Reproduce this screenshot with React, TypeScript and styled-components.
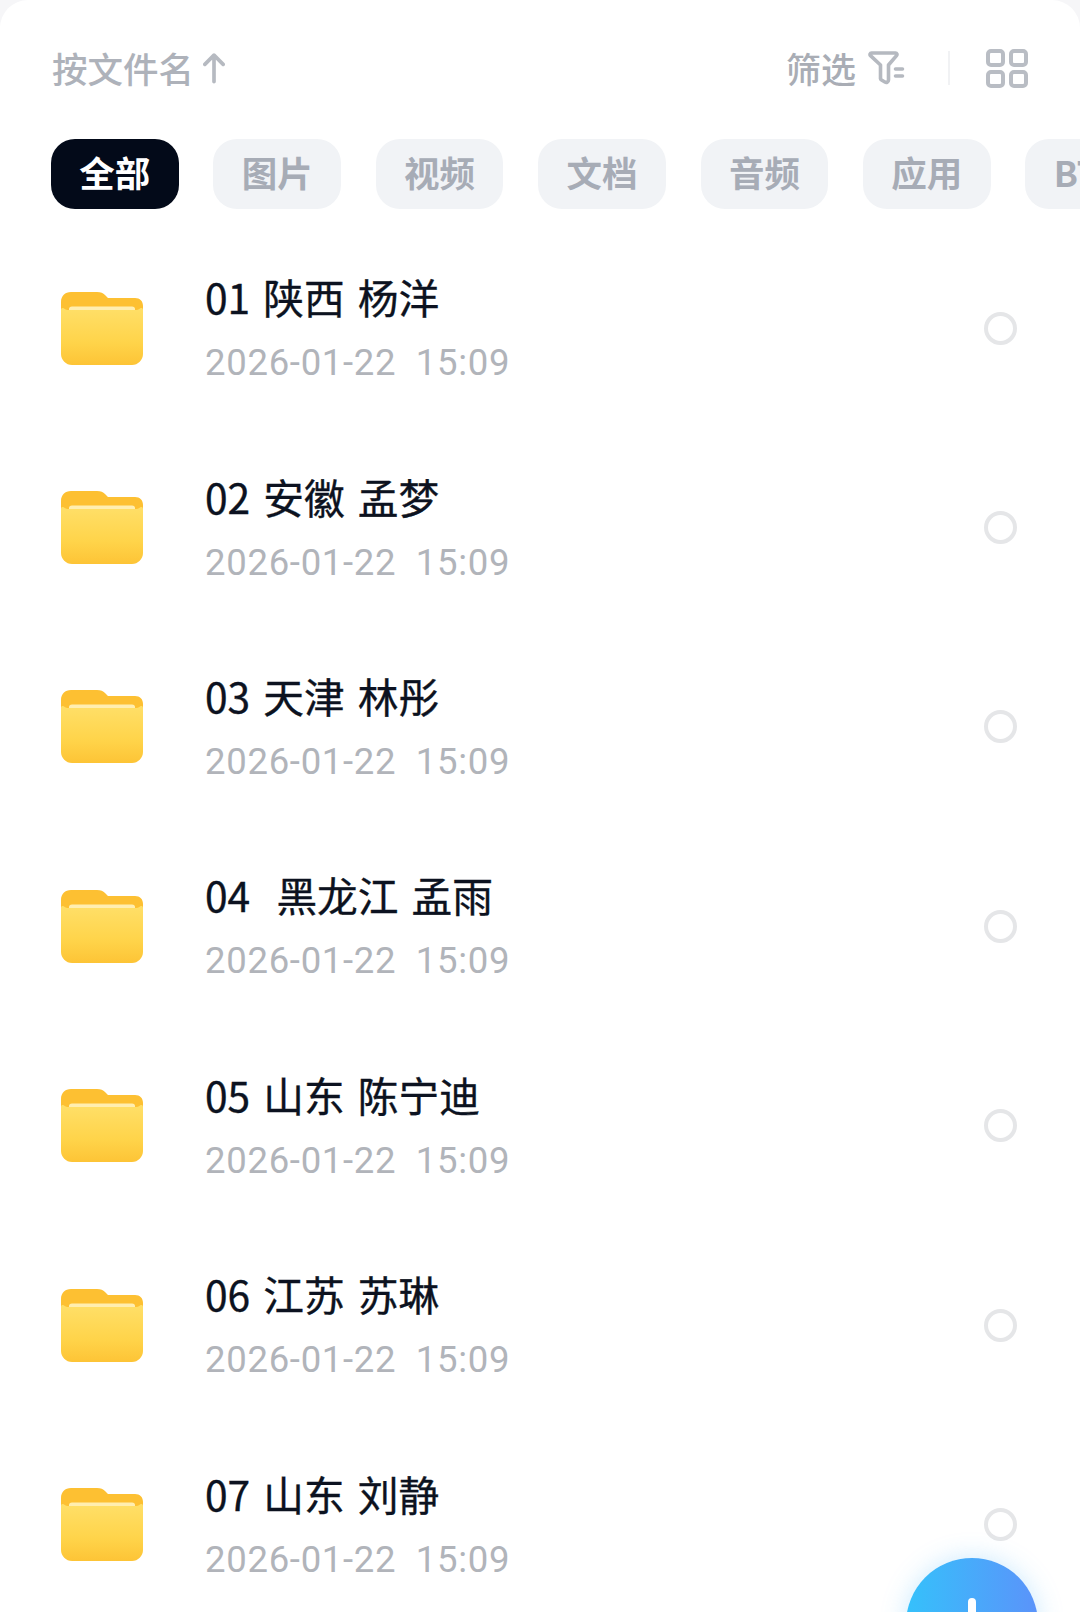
import React from "react";
import styled, { createGlobalStyle } from "styled-components";

const Global = createGlobalStyle`
  html, body { margin: 0; padding: 0; background: #f6f6f8; }
  body { width: 1080px; height: 1612px; overflow: hidden; }
  #root { width: 1080px; height: 1612px; }
`;

const cjk = `"Noto Sans CJK SC", "Noto Sans", sans-serif`;

const Sheet = styled.div`
  position: relative;
  width: 1080px;
  height: 1612px;
  overflow: hidden;
  background: #fff;
  border-radius: 28px 28px 0 0;
  font-family: ${cjk};
`;

const Toolbar = styled.div`
  display: flex;
  align-items: center;
  justify-content: space-between;
  height: 70px;
  padding: 33px 52px 1px 52px;
`;

const SortLabel = styled.div`
  display: flex;
  align-items: center;
  gap: 9px;
  font-size: 35.5px;
  font-weight: 500;
  line-height: 40px;
  color: #aeb2ba;
`;

const Tools = styled.div`
  display: flex;
  align-items: center;
`;

const FilterLabel = styled.span`
  font-size: 35px;
  font-weight: 500;
  line-height: 40px;
  color: #a9adb5;
  margin-right: 12px;
`;

const Divider = styled.div`
  width: 2px;
  height: 34px;
  background: #f1f2f4;
  margin: 0 36px 0 43px;
`;

const Chips = styled.div`
  display: flex;
  gap: 34.8px;
  margin-top: 35px;
  padding-left: 51px;
  width: 1200px;
`;

const Chip = styled.div<{ $active?: boolean }>`
  flex: none;
  height: 70px;
  box-sizing: border-box;
  padding: 0 28.3px 5px;
  border-radius: 24px;
  display: flex;
  align-items: center;
  justify-content: center;
  font-size: 35.5px;
  font-weight: 700;
  background: ${(p) => (p.$active ? "#030a19" : "#f1f3f6")};
  color: ${(p) => (p.$active ? "#ffffff" : "#a7acb6")};
`;

const List = styled.div`
  margin-top: 19.5px;
`;

const Row = styled.div`
  display: flex;
  align-items: center;
  height: 199.4px;
  padding-left: 60.5px;
  padding-right: 63px;
`;

const FolderWrap = styled.div`
  flex: none;
  width: 82px;
  height: 73px;
  margin-right: 62.5px;
`;

const Info = styled.div`
  flex: 1;
  display: flex;
  flex-direction: column;
  padding-top: 2px;
`;

const Name = styled.div`
  font-size: 40.7px;
  line-height: 50px;
  font-weight: 400;
  word-spacing: 4px;
  color: #0c1220;
  -webkit-text-stroke: 0.35px #0c1220;
  white-space: pre;
`;

const Time = styled.div`
  margin-top: 18px;
  font-family: Roboto, "Noto Sans", sans-serif;
  font-size: 36.5px;
  line-height: 46px;
  font-weight: 400;
  color: #b1b4ba;
  white-space: pre;
  letter-spacing: 0.7px;
`;

const Radio = styled.div`
  flex: none;
  width: 33px;
  height: 33px;
  box-sizing: border-box;
  border: 4px solid #e5e6e8;
  border-radius: 50%;
`;

const Fab = styled.div`
  position: absolute;
  left: 906px;
  top: 1558px;
  width: 132px;
  height: 132px;
  border-radius: 50%;
  background: linear-gradient(90deg, #35c1fb 0%, #5b93fa 100%);
  box-shadow: 0 0 26px rgba(70, 180, 250, 0.28);
  display: flex;
  align-items: center;
  justify-content: center;
`;

const ArrowUp = () => (
  <svg width="22" height="32" viewBox="0 0 24 34" fill="none" stroke="#b6bac1" strokeWidth="4" strokeLinecap="round" strokeLinejoin="round">
    <path d="M12 32V3M2 13 12 3l10 10" />
  </svg>
);

const FilterIcon = () => (
  <svg width="37" height="34" viewBox="0 0 36 34" fill="none" stroke="#b5b9c0" strokeWidth="3.6" strokeLinecap="round" strokeLinejoin="round">
    <path d="M3 2h24a1.5 1.5 0 0 1 1 2.6L20 14v15c0 2-2 3-3.6 2L13 29a2 2 0 0 1-1-2V14L2 4.6A1.5 1.5 0 0 1 3 2Z" />
    <path d="M27 18h7M27 25h7" />
  </svg>
);

const GridIcon = () => (
  <svg width="42" height="39" viewBox="0 0 42 39" fill="none" stroke="#b9bdc4" strokeWidth="4">
    <rect x="2" y="2" width="15" height="14" rx="3" />
    <rect x="25" y="2" width="15" height="14" rx="3" />
    <rect x="2" y="23" width="15" height="14" rx="3" />
    <rect x="25" y="23" width="15" height="14" rx="3" />
  </svg>
);

const FolderIcon = ({ id }: { id: number }) => (
  <svg width="82" height="73" viewBox="0 0 82 73">
    <defs>
      <linearGradient id={`front${id}`} x1="0" y1="0" x2="0" y2="1">
        <stop offset="0" stopColor="#ffdf68" />
        <stop offset="0.6" stopColor="#ffd44a" />
        <stop offset="1" stopColor="#fdc436" />
      </linearGradient>
    </defs>
    <path d="M0 10C0 4 4 0 10 0h26c4 0 6 1 8 3l3 3h27c5 0 8 3 8 8v44H0Z" fill="#fdc032" />
    <path d="M8 17c0-1.5 1-2.5 3-2.5h60c2 0 3 1 3 2.5v6H8Z" fill="#ffeeb0" />
    <path d="M0 18c0-1.800 1.200-2.600 3-1.500 1.500 1 3 1.500 5 1.500h66c2 0 3.500-.5 5-1.500 1.800-1.100 3-.3 3 1.500v44c0 6-5 11-11 11H11C5 73 0 68 0 62Z" fill={`url(#front${id})`} />
  </svg>
);

const tabs = ["全部", "图片", "视频", "文档", "音频", "应用", "BT"];
const names = [
  "01 陕西 杨洋",
  "02 安徽 孟梦",
  "03 天津 林彤",
  "04  黑龙江 孟雨",
  "05 山东 陈宁迪",
  "06 江苏 苏琳",
  "07 山东 刘静",
];

export default function App() {
  return (
    <>
      <Global />
      <Sheet>
        <Toolbar>
          <SortLabel>
            按文件名
            <ArrowUp />
          </SortLabel>
          <Tools>
            <FilterLabel>筛选</FilterLabel>
            <FilterIcon />
            <Divider />
            <GridIcon />
          </Tools>
        </Toolbar>
        <Chips>
          {tabs.map((t, i) => (
            <Chip key={t} $active={i === 0}>
              {t}
            </Chip>
          ))}
        </Chips>
        <List>
          {names.map((n, i) => (
            <Row key={n}>
              <FolderWrap>
                <FolderIcon id={i} />
              </FolderWrap>
              <Info>
                <Name>{n}</Name>
                <Time>2026-01-22  15:09</Time>
              </Info>
              <Radio />
            </Row>
          ))}
        </List>
        <Fab>
          <svg width="52" height="52" viewBox="0 0 52 52" stroke="#fff" strokeWidth="8" strokeLinecap="round">
            <path d="M26 4v44M4 26h44" />
          </svg>
        </Fab>
      </Sheet>
    </>
  );
}
